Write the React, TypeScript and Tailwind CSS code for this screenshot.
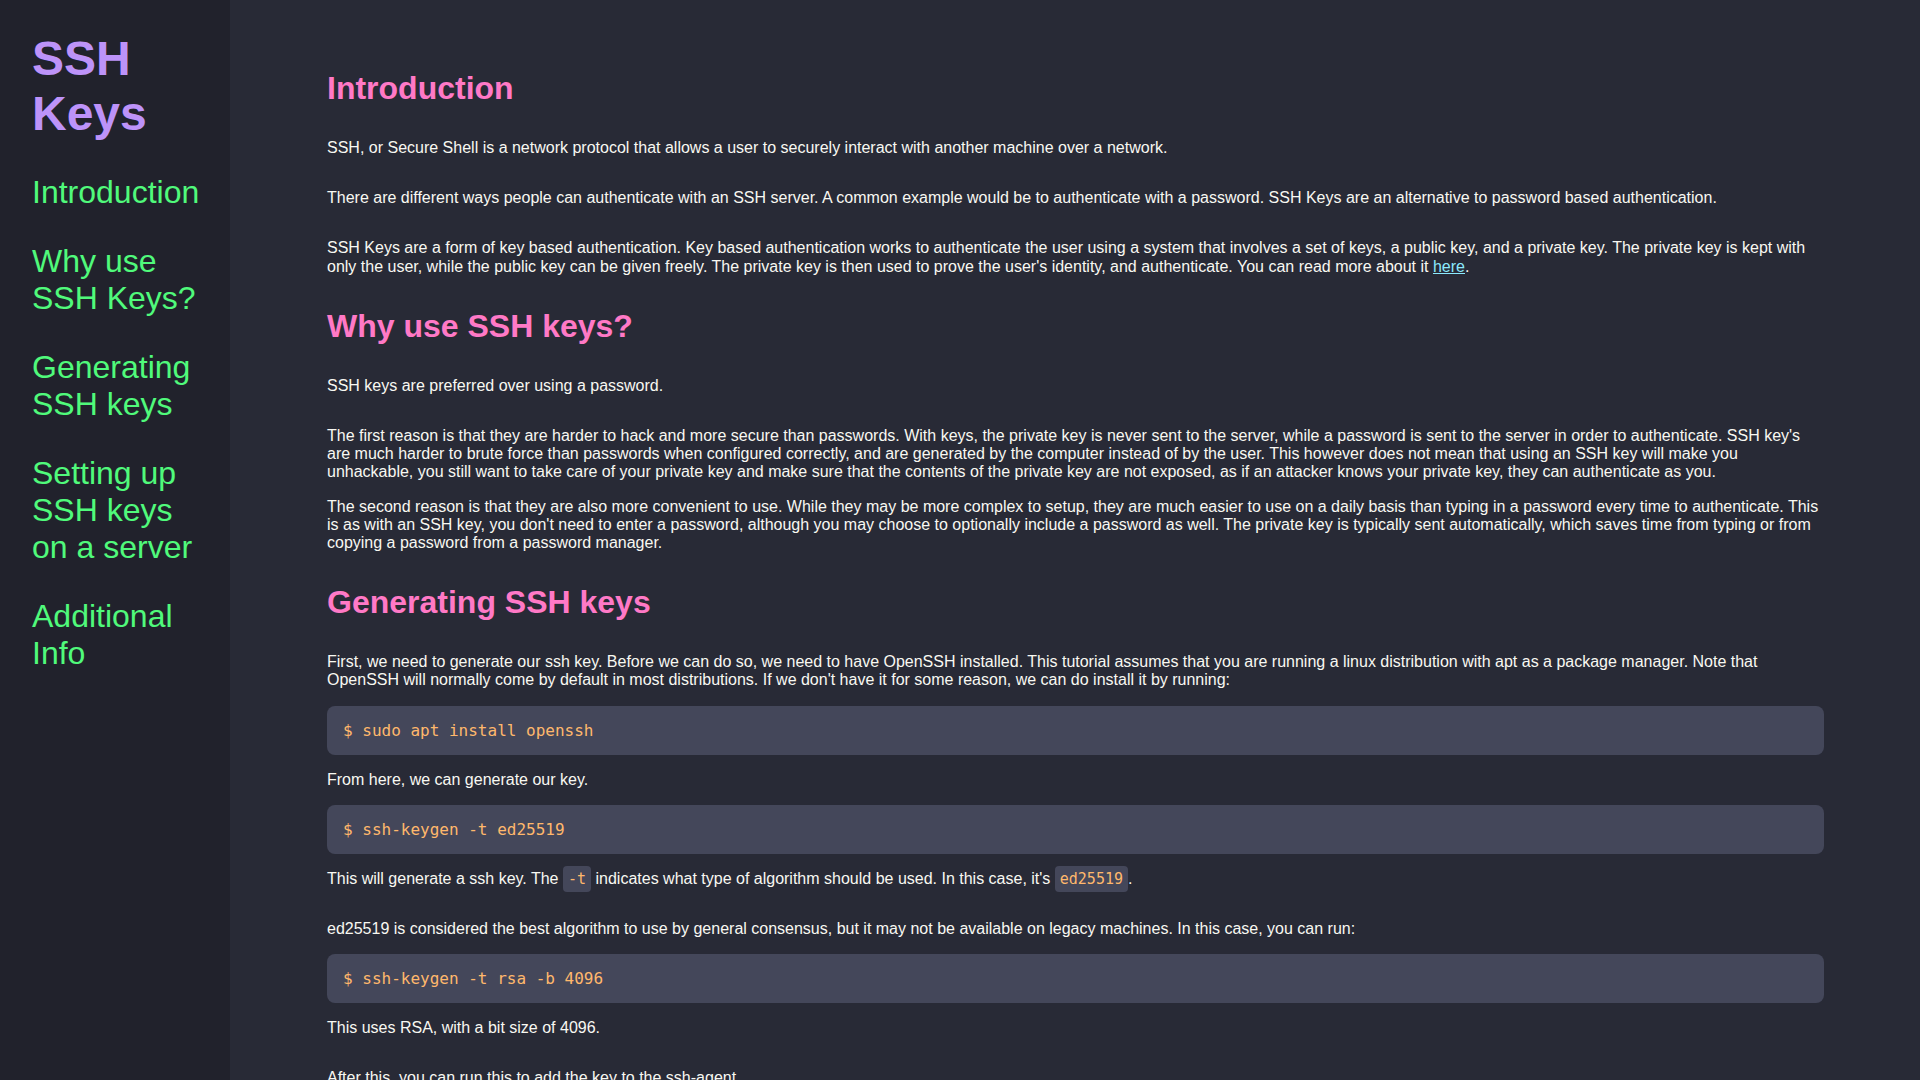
import React from "react";

const navItems = [
  "Introduction",
  "Why use SSH Keys?",
  "Generating SSH keys",
  "Setting up SSH keys on a server",
  "Additional Info",
];

const CodeBlock: React.FC<{ children: React.ReactNode; className?: string }> = ({ children, className = "" }) => (
  <pre
    className={`bg-[#44475a] text-[#ffb86c] rounded-lg px-4 py-4 text-[16px] leading-[17px] ${className}`}
    style={{ fontFamily: '"DejaVu Sans Mono", "Liberation Mono", monospace' }}
  >
    {children}
  </pre>
);

const InlineCode: React.FC<{ children: React.ReactNode }> = ({ children }) => (
  <code
    className="bg-[#44475a] text-[#ffb86c] rounded-[4px] px-[5px] py-[4px] text-[15px]"
    style={{ fontFamily: '"DejaVu Sans Mono", "Liberation Mono", monospace' }}
  >
    {children}
  </code>
);

const Heading: React.FC<{ children: React.ReactNode; className?: string }> = ({ children, className = "" }) => (
  <h2 className={`text-[32px] leading-[37px] font-bold text-[#ff79c6] ${className}`}>{children}</h2>
);

export default function App() {
  return (
    <div
      className="flex h-screen w-full overflow-hidden bg-[#282a36] text-[#f8f8f2]"
      style={{ fontFamily: '"Liberation Sans", Arial, sans-serif' }}
    >
      {/* Sidebar */}
      <nav className="w-[230px] shrink-0 h-full bg-[#21222c] pl-8 pr-4 pt-[31px]">
        <h1 className="text-[48px] leading-[55px] font-bold text-[#bd93f9]">SSH Keys</h1>
        <ul className="flex flex-col gap-8 mt-[33px]">
          {navItems.map((item) => (
            <li key={item}>
              <a className="text-[32px] leading-[37px] text-[#50fa7b] cursor-pointer">{item}</a>
            </li>
          ))}
        </ul>
      </nav>

      {/* Content */}
      <main className="flex-1 h-full overflow-hidden pl-[97px] pr-[96px] pt-[70px] text-[16px] leading-[18.2px]">
        <Heading>Introduction</Heading>
        <p className="mt-8">
          SSH, or Secure Shell is a network protocol that allows a user to securely interact with another machine over a network.
        </p>
        <p className="mt-8">
          There are different ways people can authenticate with an SSH server. A common example would be to authenticate with a
          password. SSH Keys are an alternative to password based authentication.
        </p>
        <p className="mt-8">
          SSH Keys are a form of key based authentication. Key based authentication works to authenticate the user using a system
          that involves a set of keys, a public key, and a private key. The private key is kept with only the user, while the public
          key can be given freely. The private key is then used to prove the user's identity, and authenticate. You can read more
          about it{" "}
          <a className="text-[#8be9fd] underline cursor-pointer">here</a>.
        </p>

        <Heading className="mt-8">Why use SSH keys?</Heading>
        <p className="mt-8">SSH keys are preferred over using a password.</p>
        <p className="mt-8">
          The first reason is that they are harder to hack and more secure than passwords. With keys, the private key is never sent
          to the server, while a password is sent to the server in order to authenticate. SSH key's are much harder to brute force
          than passwords when configured correctly, and are generated by the computer instead of by the user. This however does not
          mean that using an SSH key will make you unhackable, you still want to take care of your private key and make sure that the
          contents of the private key are not exposed, as if an attacker knows your private key, they can authenticate as you.
        </p>
        <p className="mt-4">
          The second reason is that they are also more convenient to use. While they may be more complex to setup, they are much
          easier to use on a daily basis than typing in a password every time to authenticate. This is as with an SSH key, you don't
          need to enter a password, although you may choose to optionally include a password as well. The private key is typically
          sent automatically, which saves time from typing or from copying a password from a password manager.
        </p>

        <Heading className="mt-8">Generating SSH keys</Heading>
        <p className="mt-8">
          First, we need to generate our ssh key. Before we can do so, we need to have OpenSSH installed. This tutorial assumes that
          you are running a linux distribution with apt as a package manager. Note that OpenSSH will normally come by default in most
          distributions. If we don't have it for some reason, we can do install it by running:
        </p>
        <CodeBlock className="mt-4">$ sudo apt install openssh</CodeBlock>
        <p className="mt-4">From here, we can generate our key.</p>
        <CodeBlock className="mt-4">$ ssh-keygen -t ed25519</CodeBlock>
        <p className="mt-4">
          This will generate a ssh key. The <InlineCode>-t</InlineCode> indicates what type of algorithm should be used. In this
          case, it's <InlineCode>ed25519</InlineCode>.
        </p>
        <p className="mt-8">
          ed25519 is considered the best algorithm to use by general consensus, but it may not be available on legacy machines. In
          this case, you can run:
        </p>
        <CodeBlock className="mt-4">$ ssh-keygen -t rsa -b 4096</CodeBlock>
        <p className="mt-4">This uses RSA, with a bit size of 4096.</p>
        <p className="mt-8">After this, you can run this to add the key to the ssh-agent</p>
      </main>
    </div>
  );
}
